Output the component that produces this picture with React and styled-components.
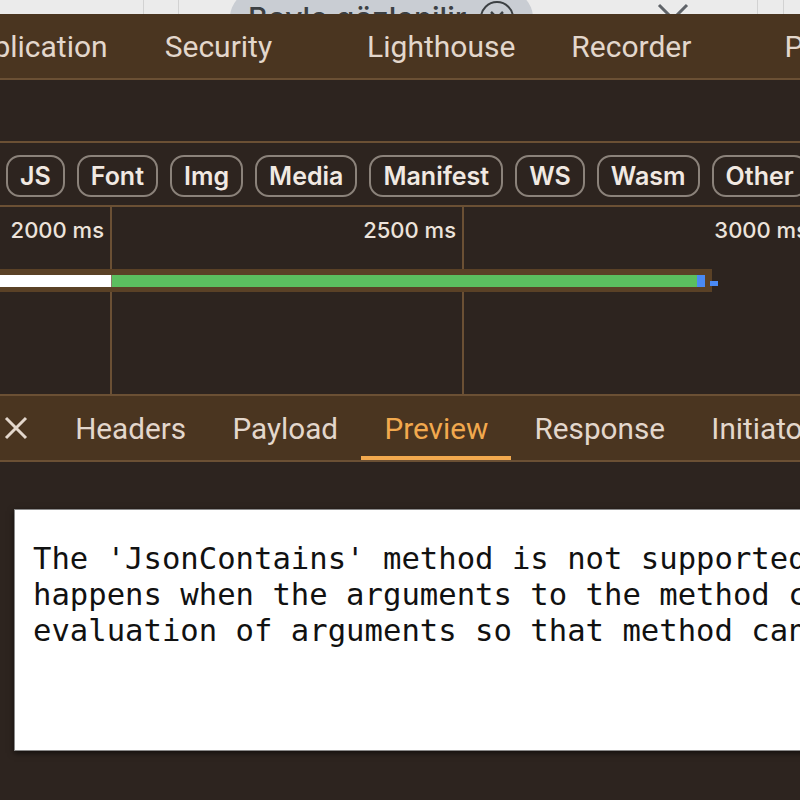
import React from "react";
import styled, { createGlobalStyle } from "styled-components";

const GlobalStyle = createGlobalStyle`
  html, body {
    margin: 0;
    padding: 0;
    background: #2d241f;
    overflow: hidden;
  }
  body {
    font-family: "Roboto", "Liberation Sans", sans-serif;
  }
`;

const Page = styled.div`
  width: 800px;
  height: 800px;
  overflow: hidden;
  display: flex;
  flex-direction: column;
  background: #2d241f;
`;

/* strip of the page behind devtools */
const BrowserStrip = styled.div`
  position: relative;
  height: 14px;
  flex-shrink: 0;
  background: #ebebeb;
  overflow: hidden;
  display: flex;
`;

const StripLine = styled.div`
  position: absolute;
  top: 0;
  bottom: 0;
  left: ${(p) => p.$x}px;
  width: 1px;
  background: #d2d2d2;
`;

const Pill = styled.div`
  position: absolute;
  left: 230px;
  top: -10px;
  width: 303px;
  height: 56px;
  border-radius: 28px;
  background: #c9cdd3;
  display: flex;
  align-items: center;
  gap: 14px;
  padding-left: 18px;
  box-sizing: border-box;
  font-family: "Inter", sans-serif;
  font-size: 30px;
  font-weight: 500;
  color: #3c4043;
  white-space: nowrap;
`;

const PillClose = styled.span`
  width: 34px;
  height: 34px;
  border: 2.5px solid #3c4043;
  border-radius: 50%;
  box-sizing: border-box;
  display: flex;
  align-items: center;
  justify-content: center;
  flex-shrink: 0;
`;

const Chevron = styled.svg`
  position: absolute;
  left: 655px;
  top: 3px;
`;

const TabBar = styled.div`
  height: 64px;
  flex-shrink: 0;
  background: #4a3520;
  border-bottom: 2px solid #6b5034;
  display: flex;
  align-items: center;
  white-space: nowrap;
`;

const MainTab = styled.div`
  margin-left: ${(p) => p.$ml || 0}px;
  font-size: 30px;
  color: #e3d7cc;
  flex-shrink: 0;
`;

const EmptyBar = styled.div`
  height: 61px;
  flex-shrink: 0;
  border-bottom: 2px solid #6b5034;
  background: #2d241f;
`;

const FilterRow = styled.div`
  height: 64px;
  flex-shrink: 0;
  box-sizing: border-box;
  padding: 4px 0 0 6px;
  border-bottom: 2px solid #6b5034;
  display: flex;
  align-items: center;
  gap: 12px;
  white-space: nowrap;
`;

const Chip = styled.div`
  flex-shrink: 0;
  height: 42px;
  box-sizing: border-box;
  border: 2px solid #8b827a;
  border-radius: 14px;
  padding: 0 12px;
  display: flex;
  align-items: center;
  font-family: "Inter", sans-serif;
  font-weight: 600;
  font-size: 25px;
  color: #f1e9e2;
`;

const Timeline = styled.div`
  position: relative;
  height: 187px;
  flex-shrink: 0;
  border-bottom: 2px solid #6b5034;
  display: flex;
`;

const TimeCell = styled.div`
  flex-shrink: 0;
  width: ${(p) => p.$w}px;
  box-sizing: border-box;
  border-right: 2px solid #6b5034;
  padding: 10px 6px 0 0;
  text-align: right;
  font-family: "Inter", sans-serif;
  font-weight: 500;
  font-size: 22px;
  color: #ece3db;
`;

const BarTrack = styled.div`
  position: absolute;
  left: 0;
  top: 62px;
  width: 712px;
  height: 23px;
  background: #5a4126;
  display: flex;
  align-items: center;
`;

const BarSegment = styled.div`
  height: 12px;
  width: ${(p) => p.$w}px;
  background: ${(p) => p.$c};
  flex-shrink: 0;
`;

const BarDot = styled.div`
  position: absolute;
  left: 710px;
  top: 74px;
  width: 8px;
  height: 5px;
  background: #4a8af4;
`;

const DetailTabs = styled.div`
  height: 64px;
  flex-shrink: 0;
  background: #4a3520;
  border-bottom: 2px solid #6b5034;
  display: flex;
  align-items: stretch;
  white-space: nowrap;
`;

const CloseTab = styled.div`
  width: 52px;
  flex-shrink: 0;
  display: flex;
  align-items: center;
  padding-left: 3px;
  box-sizing: border-box;
`;

const DetailTab = styled.div`
  flex-shrink: 0;
  padding: 0 23.2px;
  display: flex;
  align-items: center;
  font-size: 29.7px;
  color: ${(p) => (p.$active ? "#f2a94e" : "#e3d7cc")};
  box-shadow: ${(p) => (p.$active ? "inset 0 -4px 0 #f2a94e" : "none")};
`;

const PreviewArea = styled.div`
  flex: 1;
  padding: 47px 0 0 14px;
  background: #2d241f;
`;

const PreviewBox = styled.div`
  width: 900px;
  height: 242px;
  box-sizing: border-box;
  background: #ffffff;
  border: 1px solid #8a8a8a;
  box-shadow: 0 2px 6px rgba(0, 0, 0, 0.6);
  padding: 31px 0 0 18px;
  font-family: "DejaVu Sans Mono", monospace;
  font-size: 30.6px;
  line-height: 36px;
  color: #111111;
  white-space: pre;
  overflow: hidden;
`;

const mainTabs = [
  { label: "Application", ml: -43 },
  { label: "Security", ml: 57 },
  { label: "Lighthouse", ml: 95 },
  { label: "Recorder", ml: 56 },
  { label: "Performance", ml: 93 },
];

const filters = ["JS", "Font", "Img", "Media", "Manifest", "WS", "Wasm", "Other"];

const detailTabs = ["Headers", "Payload", "Preview", "Response", "Initiator"];

const message = [
  "The 'JsonContains' method is not supported. This",
  "happens when the arguments to the method cannot be",
  "evaluation of arguments so that method can be",
];

export default function App() {
  return (
    <Page>
      <GlobalStyle />
      <BrowserStrip>
        <StripLine $x={143} />
        <StripLine $x={178} />
        <StripLine $x={757} />
        <StripLine $x={783} />
        <Pill>
          Boyle gözlenilir
          <PillClose>
            <svg width="16" height="16" viewBox="0 0 16 16">
              <path d="M2 2 L14 14 M14 2 L2 14" stroke="#3c4043" strokeWidth="2.5" />
            </svg>
          </PillClose>
        </Pill>
        <Chevron width="36" height="20" viewBox="0 0 36 20">
          <path d="M4 2 L18 16 L32 2" stroke="#5f6368" strokeWidth="3" fill="none" />
        </Chevron>
      </BrowserStrip>

      <TabBar>
        {mainTabs.map((t) => (
          <MainTab key={t.label} $ml={t.ml}>
            {t.label}
          </MainTab>
        ))}
      </TabBar>

      <EmptyBar />

      <FilterRow>
        {filters.map((f) => (
          <Chip key={f}>{f}</Chip>
        ))}
      </FilterRow>

      <Timeline>
        <TimeCell $w={112}>2000 ms</TimeCell>
        <TimeCell $w={352}>2500 ms</TimeCell>
        <TimeCell $w={352}>3000 ms</TimeCell>
        <BarTrack>
          <BarSegment $w={111} $c="#ffffff" />
          <BarSegment $w={1} $c="#8a7a6a" />
          <BarSegment $w={585} $c="#5bbf5f" />
          <BarSegment $w={8} $c="#4a8af4" />
        </BarTrack>
        <BarDot />
      </Timeline>

      <DetailTabs>
        <CloseTab>
          <svg width="26" height="26" viewBox="0 0 26 26">
            <path d="M3 3 L23 23 M23 3 L3 23" stroke="#e3d7cc" strokeWidth="3" />
          </svg>
        </CloseTab>
        {detailTabs.map((t) => (
          <DetailTab key={t} $active={t === "Preview"}>
            {t}
          </DetailTab>
        ))}
      </DetailTabs>

      <PreviewArea>
        <PreviewBox>{message.join("\n")}</PreviewBox>
      </PreviewArea>
    </Page>
  );
}
